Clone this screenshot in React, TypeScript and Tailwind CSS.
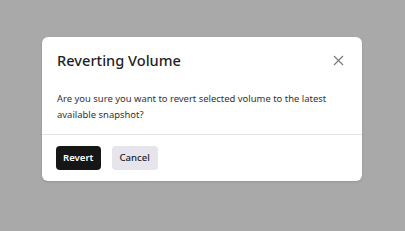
import { X } from "lucide-react";

export default function App() {
  return (
    <div
      className="h-screen w-full bg-[#a9a9a9] flex justify-center pt-[37px] pr-[1px]"
      style={{ fontFamily: '"Noto Sans", "Open Sans", sans-serif' }}
    >
      <div className="w-[320px] h-[144px] bg-white rounded-md shadow-sm flex flex-col">
        {/* Header */}
        <div className="flex items-center justify-between pl-[15px] pr-[15px] pt-[11px]">
          <h2 className="text-[14.6px] leading-[24px] font-medium text-[#1f1f1f]">
            Reverting Volume
          </h2>
          <button className="text-[#77737d]">
            <X size={17} strokeWidth={1.5} />
          </button>
        </div>

        {/* Body */}
        <p className="px-[15px] mt-[19px] text-[9.45px] leading-[16px] text-[#333]">
          Are you sure you want to revert selected volume to the latest available snapshot?
        </p>

        {/* Footer */}
        <div className="mt-[11px] border-t border-[#e4e4e7] flex gap-[11px] px-[14px] pt-[11px]">
          <button className="h-[24px] px-[7px] rounded-[4px] bg-[#161616] text-white text-[9.6px] font-semibold">
            Revert
          </button>
          <button className="h-[24px] px-[8px] rounded-[4px] bg-[#e6e4ec] text-[#1f1f1f] text-[9.6px] font-medium">
            Cancel
          </button>
        </div>
      </div>
    </div>
  );
}
